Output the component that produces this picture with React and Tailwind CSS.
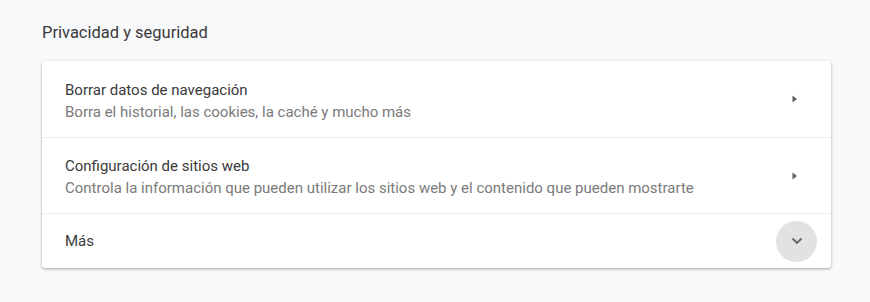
import React from 'react';

function ArrowRight() {
  return (
    <svg width="6" height="8" viewBox="0 0 6 8" className="text-[#5f6368]">
      <path d="M0.5 0.5 L5 4 L0.5 7.5 Z" fill="currentColor" />
    </svg>
  );
}

function ChevronDown() {
  return (
    <svg width="12" height="8" viewBox="0 0 12 8" className="text-[#5f6368]">
      <path d="M1.5 1.5 L6 6 L10.5 1.5" fill="none" stroke="currentColor" strokeWidth="1.8" />
    </svg>
  );
}

const rows = [
  {
    title: 'Borrar datos de navegación',
    subtitle: 'Borra el historial, las cookies, la caché y mucho más',
  },
  {
    title: 'Configuración de sitios web',
    subtitle: 'Controla la información que pueden utilizar los sitios web y el contenido que pueden mostrarte',
  },
];

export default function App() {
  return (
    <div
      className="w-[870px] h-[302px] bg-[#f8f9fa] pt-[22px] pl-[42px] pr-[39px]"
      style={{ fontFamily: 'Roboto, "Liberation Sans", sans-serif' }}
    >
      <h2 className="text-[16.5px] leading-[22px] text-[#3a3a3a]">Privacidad y seguridad</h2>
      <div className="mt-[17px] bg-white rounded-[3px] shadow-[0_1px_2px_rgba(60,64,67,0.3),0_1px_3px_1px_rgba(60,64,67,0.12)]">
        {rows.map((r, i) => (
          <div
            key={i}
            className={`flex items-center h-[76px] pl-[23px] pr-[33px] ${i > 0 ? 'border-t border-[#ececec]' : ''}`}
          >
            <div className="flex-1 pt-[4px]">
              <div className="text-[15px] leading-[21px] text-[#3a3a3a]">{r.title}</div>
              <div className="text-[15px] leading-[21px] text-[#7a7a7a] mt-[1px]">{r.subtitle}</div>
            </div>
            <ArrowRight />
          </div>
        ))}
        <div className="flex items-center h-[55px] pl-[23px] pr-[14px] border-t border-[#ececec]">
          <div className="flex-1 text-[15px] text-[#3a3a3a] pt-[1px]">Más</div>
          <div className="w-[41px] h-[41px] rounded-full bg-[#e2e2e2] flex items-center justify-center">
            <ChevronDown />
          </div>
        </div>
      </div>
    </div>
  );
}
